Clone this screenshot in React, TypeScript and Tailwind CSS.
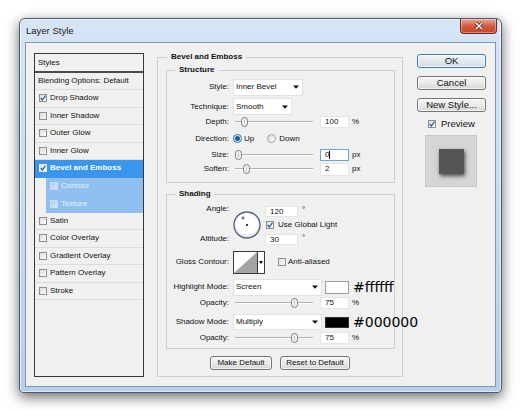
import React from "react";

function Tri() {
  return (
    <svg width="6" height="4" viewBox="0 0 6 4" className="shrink-0">
      <path d="M0 0.4H6L3 3.8Z" fill="#111" />
    </svg>
  );
}

function Check({ checked = false, tone = "normal" }: { checked?: boolean; tone?: "normal" | "sub" | "active" }) {
  const cls =
    tone === "sub"
      ? "border-[#c9def4] from-[#a9cdf1] to-[#d6e7f8]"
      : tone === "active"
      ? "border-[#e4edf6] from-[#e2e2e2] to-white"
      : "border-[#8e8f8f] from-[#dcdcdc] to-[#fbfbfb]";
  return (
    <span className={`flex w-[8px] h-[8px] shrink-0 border bg-gradient-to-br ${cls}`}>
      {checked && (
        <svg viewBox="0 0 6 6" className="w-full h-full">
          <path d="M0.7 3 L2.4 5 L5.5 0.6" stroke="#2b56a6" strokeWidth="1.2" fill="none" />
        </svg>
      )}
    </span>
  );
}

function Radio({ on = false }: { on?: boolean }) {
  return (
    <span
      className={`flex w-[9px] h-[9px] shrink-0 rounded-full border items-center justify-center bg-gradient-to-br ${
        on ? "border-[#2f6ea6] from-[#cfe6f7] to-white" : "border-[#a2a2a2] from-[#dadada] to-white"
      }`}
    >
      {on && <span className="w-[5px] h-[5px] rounded-full bg-[#1b5a98]" />}
    </span>
  );
}

function L({ children }: { children: React.ReactNode }) {
  return <span className="w-[62px] mr-[4px] text-right shrink-0 whitespace-nowrap">{children}</span>;
}

function Select({ text, w, h = "h-[17px]" }: { text: string; w: string; h?: string }) {
  return (
    <div className={`${w} ${h} shrink-0 bg-white border border-[#e2e2e2] flex items-center justify-between pl-[2px] pr-[3px]`}>
      <span>{text}</span>
      <Tri />
    </div>
  );
}

function Num({
  v,
  focus = false,
  w = "w-[29px]",
  h = "h-[12px]",
  cls = "",
}: {
  v: string;
  focus?: boolean;
  w?: string;
  h?: string;
  cls?: string;
}) {
  return (
    <div
      className={`${w} ${h} ${cls} shrink-0 bg-white border ${
        focus ? "border-[#6ea4d8]" : "border-[#e4e4e4]"
      } flex items-center pl-[4px]`}
    >
      <span>{v}</span>
      {focus && <span className="w-px h-[8px] bg-black" />}
    </div>
  );
}

function Slider({ pos }: { pos: number }) {
  return (
    <div className="relative ml-[2px] w-[78px] h-[10px] flex items-center shrink-0">
      <div className="w-full h-[2px] bg-[#b2b2b2] border-b border-white" />
      <svg width="7" height="10" viewBox="0 0 7 10" className="absolute top-0" style={{ left: pos - 3.5 }}>
        <rect x="0.5" y="0.5" width="6" height="9" rx="3" fill="#f4f4f4" stroke="#7d7d7d" />
        <line x1="3.5" y1="2.5" x2="3.5" y2="7.5" stroke="#c4c4c4" />
      </svg>
    </div>
  );
}

function WinBtn({ children, cls = "", def = false }: { children: React.ReactNode; cls?: string; def?: boolean }) {
  return (
    <div
      className={`flex items-center justify-center rounded-[3px] border whitespace-nowrap ${
        def
          ? "border-[#3f7db0] bg-gradient-to-b from-[#eef4f8] to-[#d3dee6]"
          : "border-[#767676] bg-gradient-to-b from-[#f4f4f4] via-[#ebebeb] to-[#d6d6d6]"
      } shadow-[inset_0_0_0_1px_rgba(255,255,255,0.75)] ${cls}`}
    >
      {children}
    </div>
  );
}

const items: { label: string; checked?: boolean; active?: boolean; sub?: boolean }[] = [
  { label: "Drop Shadow", checked: true },
  { label: "Inner Shadow" },
  { label: "Outer Glow" },
  { label: "Inner Glow" },
  { label: "Bevel and Emboss", checked: true, active: true },
  { label: "Contour", sub: true },
  { label: "Texture", sub: true },
  { label: "Satin" },
  { label: "Color Overlay" },
  { label: "Gradient Overlay" },
  { label: "Pattern Overlay" },
  { label: "Stroke" },
];

function StyleList() {
  return (
    <div className="mt-[1px] w-[110px] h-[324px] shrink-0 border border-[#383838] bg-[#f0f0f0] text-[8px] leading-none">
      <div className="h-[19px] border-b-2 border-[#4a4a4a] flex items-center pl-[3px]">Styles</div>
      <div className="h-[17px] border-b border-[#dcdcdc] flex items-center pl-[3px] whitespace-nowrap">
        Blending Options: Default
      </div>
      {items.map((it) =>
        it.sub ? (
          <div key={it.label} className="h-[17.5px] pl-[11px] flex">
            <div className="flex-1 bg-[#8fc0ef] flex items-center pl-[4px] gap-[3px] text-[#e6f0fb]">
              <Check tone="sub" />
              <span>{it.label}</span>
            </div>
          </div>
        ) : (
          <div
            key={it.label}
            className={`h-[17.5px] border-b flex items-center pl-[4px] gap-[3px] whitespace-nowrap ${
              it.active ? "bg-[#3a95ee] border-[#3a95ee] text-white font-bold" : "border-[#dcdcdc]"
            }`}
          >
            <Check checked={it.checked} tone={it.active ? "active" : "normal"} />
            <span>{it.label}</span>
          </div>
        )
      )}
    </div>
  );
}

function AngleDial() {
  return (
    <svg width="28" height="28" viewBox="0 0 28 28" className="mt-[8px] shrink-0">
      <defs>
        <radialGradient id="dialg" cx="50%" cy="45%" r="55%">
          <stop offset="70%" stopColor="#ffffff" />
          <stop offset="100%" stopColor="#d5dae3" />
        </radialGradient>
      </defs>
      <circle cx="14" cy="14" r="13" fill="url(#dialg)" stroke="#4f5e7b" strokeWidth="1.3" />
      <path d="M10 5.3V8.7M8.3 7H11.7" stroke="#333" strokeWidth="0.8" />
      <circle cx="14" cy="14" r="1" fill="#000" />
    </svg>
  );
}

function ContourBox() {
  return (
    <div className="flex w-[32px] h-[23px] shrink-0 border border-[#3a3a3a] bg-white">
      <svg width="23" height="21" viewBox="0 0 23 21" className="shrink-0">
        <path d="M0 21 L23 0 L23 21 Z" fill="#a3a3a3" />
      </svg>
      <div className="flex-1 border-l border-[#3a3a3a] flex items-center justify-center">
        <svg width="4" height="3" viewBox="0 0 4 3">
          <path d="M0 0H4L2 3Z" fill="#111" />
        </svg>
      </div>
    </div>
  );
}

export default function App() {
  return (
    <div className="w-[520px] h-[413px] bg-white pt-[18px] pl-[19px] text-[#111] font-['Liberation_Sans',Arial,sans-serif]">
      <div className="w-[483px] h-[375px] rounded-t-[6px] rounded-b-[4px] border border-[#4d5e74] bg-gradient-to-b from-[#d6e5f6] via-[#c7dbf1] to-[#b6cfea] shadow-[0_4px_13px_rgba(0,0,0,0.6),inset_0_0_0_1px_rgba(255,255,255,0.55)] flex flex-col">
        {/* title bar */}
        <div className="h-[23px] shrink-0 flex items-start justify-between">
          <span className="self-center pl-[6px] text-[9.5px] leading-none text-[#1b1b1b]">Layer Style</span>
          <div className="mr-[4px] w-[37px] h-[15px] rounded-b-[4px] border border-t-0 border-[#6d2a1f] bg-gradient-to-b from-[#e6aa9b] via-[#d25a41] to-[#c8442c] flex items-center justify-center shadow-[inset_0_0_0_1px_rgba(255,255,255,0.35)]">
            <svg width="10" height="8" viewBox="0 0 10 8">
              <path d="M2 1L8 7M8 1L2 7" stroke="#5b1a10" strokeWidth="3" />
              <path d="M2 1L8 7M8 1L2 7" stroke="#fff" strokeWidth="1.6" />
            </svg>
          </div>
        </div>
        {/* client */}
        <div className="ml-[5px] w-[471px] h-[345px] shrink-0 border border-[#8195ad] bg-[#f0f0f0] flex items-start pl-[8px] pt-[9px]">
          <StyleList />

          <fieldset className="ml-[13px] w-[246px] h-[325px] min-w-0 shrink-0 border border-[#cfcfcf] text-[8px] leading-none">
            <legend className="ml-[9px] px-[4px] font-bold leading-[10px]">Bevel and Emboss</legend>

            <fieldset className="ml-[8px] mt-[3px] w-[229px] min-w-0 border border-[#cfcfcf] pb-[5px]">
              <legend className="ml-[8px] px-[4px] font-bold leading-[10px]">Structure</legend>
              <div className="mt-[2px] h-[20px] flex items-center">
                <L>Style:</L>
                <Select text="Inner Bevel" w="w-[70px]" />
              </div>
              <div className="h-[19px] flex items-center">
                <L>Technique:</L>
                <Select text="Smooth" w="w-[59px]" />
              </div>
              <div className="h-[12px] flex items-center">
                <L>Depth:</L>
                <Slider pos={9} />
                <Num v="100" cls="ml-[7px]" />
                <span className="ml-[3px]">%</span>
              </div>
              <div className="h-[21px] flex items-center">
                <L>Direction:</L>
                <Radio on />
                <span className="ml-[2px]">Up</span>
                <span className="ml-[13px] flex">
                  <Radio />
                </span>
                <span className="ml-[3px]">Down</span>
              </div>
              <div className="h-[12px] flex items-center">
                <L>Size:</L>
                <Slider pos={3} />
                <Num v="0" focus cls="ml-[7px]" />
                <span className="ml-[3px]">px</span>
              </div>
              <div className="h-[16px] flex items-center">
                <L>Soften:</L>
                <Slider pos={11} />
                <Num v="2" h="h-[13px]" cls="ml-[7px]" />
                <span className="ml-[3px]">px</span>
              </div>
            </fieldset>

            <fieldset className="ml-[8px] mt-[6px] w-[229px] min-w-0 border border-[#cfcfcf] pb-[4px]">
              <legend className="ml-[8px] px-[4px] font-bold leading-[10px]">Shading</legend>
              <div className="mt-[4px] h-[44px] flex">
                <div className="w-[62px] mr-[4px] shrink-0 flex flex-col items-end justify-between pt-[2px] pb-[4px] leading-[8px]">
                  <span>Angle:</span>
                  <span>Altitude:</span>
                </div>
                <AngleDial />
                <div className="ml-[4px] flex flex-col">
                  <div className="mt-[3px] flex items-start">
                    <Num v="120" w="w-[33px]" h="h-[11px]" />
                    <span className="ml-[4px] leading-[8px]">°</span>
                  </div>
                  <div className="mt-[3px] h-[9px] flex items-center">
                    <span className="ml-[1px] flex">
                      <Check checked />
                    </span>
                    <span className="ml-[4px] whitespace-nowrap">Use Global Light</span>
                  </div>
                  <div className="mt-[5px] flex items-start">
                    <Num v="30" w="w-[33px]" h="h-[11px]" />
                    <span className="ml-[4px] leading-[8px]">°</span>
                  </div>
                </div>
              </div>
              <div className="h-[30px] flex items-center">
                <L>Gloss Contour:</L>
                <ContourBox />
                <span className="ml-[13px] flex">
                  <Check />
                </span>
                <span className="ml-[2px] whitespace-nowrap">Anti-aliased</span>
              </div>
              <div className="h-[20px] flex items-center">
                <L>Highlight Mode:</L>
                <Select text="Screen" w="w-[89px]" />
                <div className="ml-[3px] w-[24px] h-[13px] shrink-0 bg-white border border-[#9d9d9d]" />
                <span className="ml-[4px] whitespace-nowrap text-[14px] leading-none text-black font-['DejaVu_Sans',sans-serif]">
                  #ffffff
                </span>
              </div>
              <div className="h-[12px] flex items-center">
                <L>Opacity:</L>
                <Slider pos={59} />
                <Num v="75" cls="ml-[7px]" />
                <span className="ml-[3px]">%</span>
              </div>
              <div className="mt-[3px] h-[20px] flex items-center">
                <L>Shadow Mode:</L>
                <Select text="Multiply" w="w-[89px]" h="h-[16px]" />
                <div className="ml-[3px] w-[24px] h-[11px] shrink-0 bg-black border border-[#333]" />
                <span className="ml-[4px] whitespace-nowrap text-[14px] leading-none text-black font-['DejaVu_Sans',sans-serif]">
                  #000000
                </span>
              </div>
              <div className="h-[12px] flex items-center">
                <L>Opacity:</L>
                <Slider pos={59} />
                <Num v="75" cls="ml-[7px]" />
                <span className="ml-[3px]">%</span>
              </div>
            </fieldset>

            <div className="mt-[7px] flex justify-center gap-[8px]">
              <WinBtn cls="w-[62px] h-[14px]">Make Default</WinBtn>
              <WinBtn cls="w-[70px] h-[14px]">Reset to Default</WinBtn>
            </div>
          </fieldset>

          <div className="ml-[14px] mt-[2px] w-[69px] shrink-0 flex flex-col text-[9.5px] leading-none">
            <WinBtn def cls="h-[14px]">OK</WinBtn>
            <WinBtn cls="mt-[8px] h-[14px]">Cancel</WinBtn>
            <WinBtn cls="mt-[8px] h-[14px]">New Style...</WinBtn>
            <div className="mt-[7px] h-[9px] flex items-center">
              <span className="ml-[11px] flex">
                <Check checked />
              </span>
              <span className="ml-[5px]">Preview</span>
            </div>
            <div className="mt-[7px] ml-[8px] w-[52px] h-[52px] bg-[#d5d5d5] border border-[#c9c9c9] flex items-center justify-center">
              <div className="w-[25px] h-[25px] bg-[#555555] shadow-[1px_2px_4px_rgba(0,0,0,0.65)]" />
            </div>
          </div>
        </div>
      </div>
    </div>
  );
}
